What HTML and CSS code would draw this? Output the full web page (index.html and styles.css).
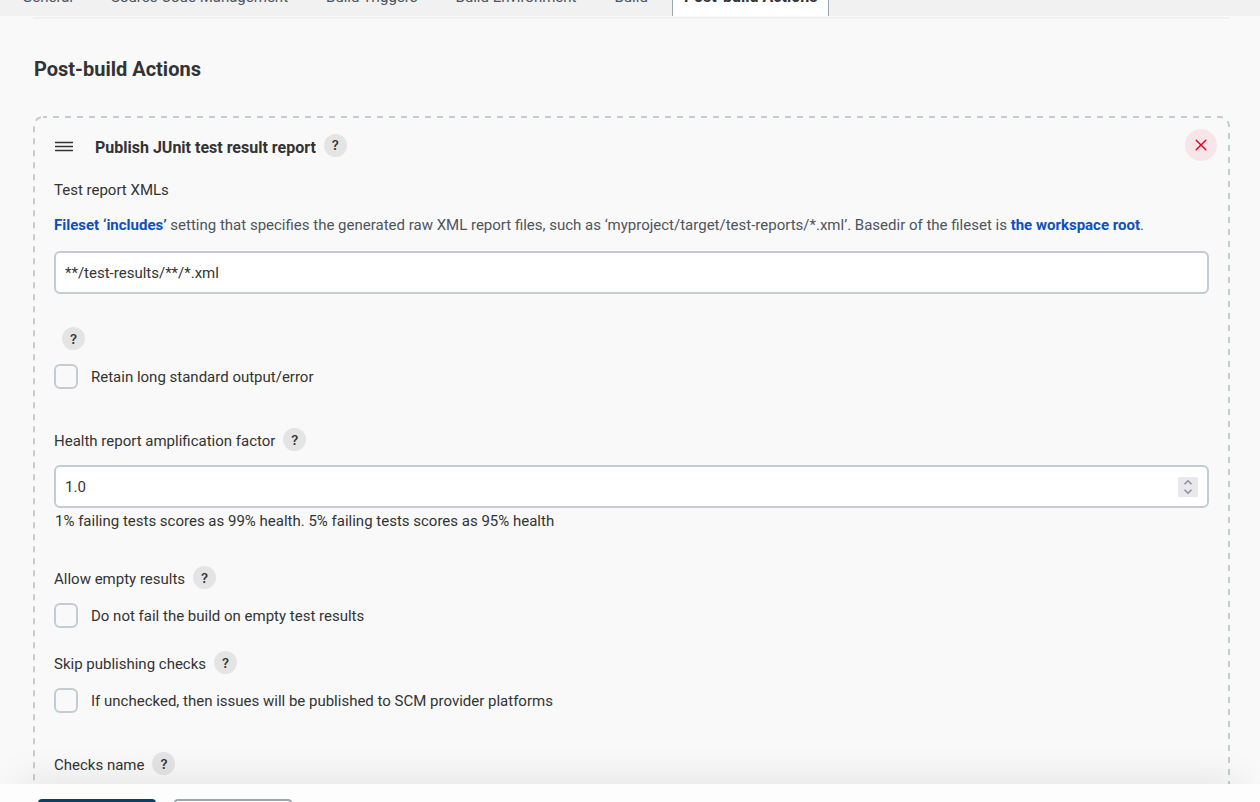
FILE: index.html
```html
<!DOCTYPE html>
<html lang="en">
<head>
<meta charset="utf-8">
<title>Post-build Actions</title>
<link rel="stylesheet" href="styles.css">
</head>
<body class="page">
<nav class="tabs">
  <a class="tab" href="#general">General</a>
  <a class="tab" href="#scm">Source Code Management</a>
  <a class="tab" href="#triggers">Build Triggers</a>
  <a class="tab" href="#environment">Build Environment</a>
  <a class="tab" href="#build">Build</a>
  <a class="tab tab-active" href="#post-build">Post-build Actions</a>
</nav>
<main class="content">
  <h1 class="title">Post-build Actions</h1>
  <section class="panel">
    <svg class="outline" aria-hidden="true"><rect class="outline-rect" x="1" y="1" rx="9"/></svg>
    <header class="panel-head">
      <svg class="handle" viewBox="0 0 18 12" aria-hidden="true"><path d="M.5 1.500h17M.5 5.500h17M.5 9.500h17"/></svg>
      <h2 class="panel-title">Publish JUnit test result report</h2>
      <button class="help" type="button">?</button>
      <button class="close" type="button" aria-label="Remove"><svg viewBox="0 0 12 12"><path d="M1.200 1.200l9.600 9.600M10.800 1.200l-9.600 9.600"/></svg></button>
    </header>
    <form class="fields" id="config">
      <label class="xml-label" for="xmls">Test report XMLs</label>
      <p class="description"><a class="link" href="#fileset">Fileset ‘includes’</a> setting that specifies the generated raw XML report files, such as ‘myproject/target/test-reports/*.xml’. Basedir of the fileset is <a class="link" href="#workspace">the workspace root</a>.</p>
      <input class="input" id="xmls" type="text" value="**/test-results/**/*.xml">
      <div class="row row-mid"><button class="help" type="button">?</button></div>
      <div class="check-row"><input class="check" type="checkbox" id="retain"><label for="retain">Retain long standard output/error</label></div>
      <div class="row row-far"><label for="factor">Health report amplification factor</label><button class="help" type="button">?</button></div>
      <div class="number">
        <input class="input" id="factor" type="number" step="0.1" value="1.0">
        <span class="spinner"><svg viewBox="0 0 20 20"><path d="M6.500 7.200L10 3.800l3.500 3.400M6.500 12.800L10 16.200l3.500-3.400"/></svg></span>
      </div>
      <p class="hint">1% failing tests scores as 99% health. 5% failing tests scores as 95% health</p>
      <div class="row row-mid"><span>Allow empty results</span><button class="help" type="button">?</button></div>
      <div class="check-row"><input class="check" type="checkbox" id="empty"><label for="empty">Do not fail the build on empty test results</label></div>
      <div class="row row-near"><span>Skip publishing checks</span><button class="help" type="button">?</button></div>
      <div class="check-row"><input class="check" type="checkbox" id="skip"><label for="skip">If unchecked, then issues will be published to SCM provider platforms</label></div>
      <div class="row row-far"><span>Checks name</span><button class="help" type="button">?</button></div>
    </form>
  </section>
</main>
<footer class="bar">
  <button class="btn btn-primary" type="submit" form="config" aria-label="Save"></button>
  <button class="btn" type="button" aria-label="Apply"></button>
</footer>
</body>
</html>
```

FILE: styles.css
```css
* { box-sizing: border-box; }
.page {
  margin: 0;
  height: 100vh;
  display: flex;
  flex-direction: column;
  overflow: hidden;
  background: #f9f9f9;
  color: #333;
  font: 15px/24px Roboto, "Noto Sans", sans-serif;
}
.tabs {
  flex: none;
  display: flex;
  align-items: flex-end;
  height: 16px;
  padding-left: 3px;
  overflow: hidden;
  background: #f1f1f1;
}
.tab {
  padding: 0 19px 7px;
  color: #4d545d;
  text-decoration: none;
  white-space: nowrap;
}
.tab-active {
  margin-left: 5px;
  padding: 0 11px 7px;
  border: solid #9ba7af;
  border-width: 0 1px;
  background: #fff;
  color: #333;
  font-size: 16px;
  font-weight: 700;
}
.content {
  flex: 1;
  min-height: 0;
  display: flex;
  flex-direction: column;
  margin: 1px 30px 0 33px;
  border-top: 2px solid #f1f1f1;
}
.title {
  margin: 38px 0 35px 1px;
  font-size: 20px;
  line-height: 24px;
  font-weight: 700;
}
.panel {
  position: relative;
  flex: none;
  min-height: 720px;
  padding: 13px;
}
.outline {
  position: absolute;
  inset: 0;
  width: 100%;
  height: 100%;
  pointer-events: none;
}
.outline-rect {
  width: calc(100% - 2px);
  height: calc(100% - 2px);
  fill: none;
  stroke: #c3ccd1;
  stroke-width: 2;
  stroke-dasharray: 6 6;
  stroke-dashoffset: 2;
}
.panel-head {
  display: flex;
  align-items: center;
  padding-left: 9px;
}
.handle {
  width: 18px;
  height: 12px;
  margin: 4px 22px 0 0;
  fill: none;
  stroke: #333;
  stroke-width: 1.4;
  stroke-linecap: round;
}
.panel-title {
  margin: 5px 0 0;
  font-size: 16px;
  line-height: 24px;
  font-weight: 700;
}
.help {
  flex: none;
  width: 23px;
  height: 23px;
  margin-left: 8px;
  padding: 0;
  border: 0;
  border-radius: 50%;
  background: #e4e4e4;
  color: #333;
  font: 600 13px/22px Inter, sans-serif;
}
.close {
  display: grid;
  place-items: center;
  width: 32px;
  height: 32px;
  margin-left: auto;
  padding: 0;
  border: 0;
  border-radius: 50%;
  background: #f7e5e9;
}
.close svg {
  width: 12px;
  height: 12px;
  fill: none;
  stroke: #e6001f;
  stroke-width: 1.4;
  stroke-linecap: round;
}
.fields {
  display: flex;
  flex-direction: column;
  padding: 17px 8px 0;
}
.description {
  margin: 11px 0 14px;
  color: #4d545d;
}
.link {
  color: #0b51bd;
  font-weight: 700;
  text-decoration: none;
}
.input {
  display: block;
  width: 100%;
  height: 43px;
  margin: 0;
  padding: 1px 9px 0;
  border: 2px solid #c3ccd1;
  border-radius: 6px;
  background: #fff;
  color: #333;
  font: inherit;
  appearance: textfield;
}
.input::-webkit-inner-spin-button { appearance: none; }
.row {
  display: flex;
  height: 24px;
  margin-bottom: 13px;
  line-height: 26px;
}
.row-far { margin-top: 39px; }
.row-mid { margin-top: 33px; }
.row-near { margin-top: 23px; }
.check-row {
  display: flex;
  align-items: center;
  gap: 13px;
  height: 25px;
}
.check {
  appearance: none;
  width: 24px;
  height: 25px;
  margin: 0;
  border: 2px solid #c3ccd1;
  border-radius: 6px;
}
.number { position: relative; }
.spinner {
  position: absolute;
  top: 12px;
  right: 11px;
  width: 20px;
  height: 20px;
  background: #e9e8ed;
}
.spinner svg {
  display: block;
  fill: none;
  stroke: #8f8e9b;
  stroke-width: 1.6;
}
.hint {
  margin: 1px 0 0 1px;
}
.bar {
  position: relative;
  flex: none;
  display: flex;
  gap: 18px;
  margin-bottom: -48px;
  padding: 15px 38px;
  background: #fdfdfd;
  box-shadow: 0 -20px 40px -20px rgba(0, 0, 0, .12);
}
.btn {
  flex: none;
  width: 118px;
  height: 36px;
  border: 2px solid #9ba7af;
  border-radius: 4px;
  background: #fdfdfd;
}
.btn-primary {
  border-color: #0b4064;
  background: #0b4064;
}
```
